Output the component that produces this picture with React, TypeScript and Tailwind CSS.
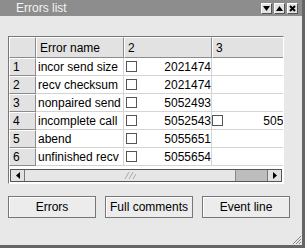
import { ReactNode } from 'react';

const rows = [
  { n: '1', name: 'incor send size', v: '2021474' },
  { n: '2', name: 'recv checksum', v: '2021474' },
  { n: '3', name: 'nonpaired send', v: '5052493' },
  { n: '4', name: 'incomplete call', v: '5052543', extra: '5055654' },
  { n: '5', name: 'abend', v: '5055651' },
  { n: '6', name: 'unfinished recv', v: '5055654' },
];

function TitleButton({ children }: { children: ReactNode }) {
  return (
    <div className="w-[11px] h-[11px] bg-[#e4e4e4] border border-t-white border-l-white border-b-[#555] border-r-[#555] flex items-center justify-center text-black">
      {children}
    </div>
  );
}

function Check() {
  return <div className="w-[11px] h-[11px] border border-[#555] bg-white shrink-0" />;
}

function HeadCell({ children, className = '' }: { children?: ReactNode; className?: string }) {
  return (
    <div
      className={`h-full bg-[#e2e2e2] border border-t-white border-l-white border-b-[#8c8c8c] border-r-[#8c8c8c] flex items-center px-[3px] shrink-0 ${className}`}
    >
      {children}
    </div>
  );
}

function Button({ label }: { label: string }) {
  return (
    <div className="w-[88px] h-[22px] bg-[#ececec] border border-[#777] shadow-[inset_1px_1px_0_#fff] flex items-center justify-center text-[12px] text-black whitespace-nowrap">
      {label}
    </div>
  );
}

export default function App() {
  return (
    <div
      className="w-[305px] h-[248px] bg-[#e8e8e8] flex flex-col border-r-[3px] border-b-[3px] border-r-[#666] border-b-[#666] overflow-hidden relative"
      style={{ fontFamily: '"Liberation Sans", Arial, sans-serif' }}
    >
      {/* title bar */}
      <div className="h-[16px] bg-[#8d8d8d] flex items-center pl-[16px] pr-[4px] shrink-0">
        <span className="text-[12px] text-[#f4f4f4] leading-none">Errors list</span>
        <div className="ml-auto flex gap-[2px]">
          <TitleButton>
            <svg width="7" height="5" viewBox="0 0 7 5"><path d="M0 0h7L3.5 5z" fill="#000" /></svg>
          </TitleButton>
          <TitleButton>
            <svg width="7" height="5" viewBox="0 0 7 5"><path d="M0 5h7L3.5 0z" fill="#000" /></svg>
          </TitleButton>
          <TitleButton>
            <svg width="7" height="7" viewBox="0 0 7 7"><path d="M1 1l5 5M6 1l-5 5" stroke="#000" strokeWidth="2" /></svg>
          </TitleButton>
        </div>
      </div>

      {/* table */}
      <div className="mt-[20px] ml-[8px] w-[276px] h-[148px] border border-t-[#777] border-l-[#777] border-b-white border-r-white flex flex-col">
        <div className="flex-1 bg-white overflow-hidden flex flex-col text-[12px] text-black">
          <div className="h-[21px] flex shrink-0 bg-[#e2e2e2]">
            <HeadCell className="w-[27px]" />
            <HeadCell className="w-[88px] border-l-[#333] border-t-[#333]">Error name</HeadCell>
            <HeadCell className="w-[88px] border-l-[#333]">2</HeadCell>
            <HeadCell className="w-[98px] border-l-[#333]">3</HeadCell>
          </div>
          {rows.map((r) => (
            <div key={r.n} className="h-[18px] flex shrink-0">
              <HeadCell className="w-[27px]">{r.n}</HeadCell>
              <div className="w-[88px] shrink-0 border-b border-r border-[#d4d4d4] flex items-center px-[2px] whitespace-nowrap overflow-hidden">
                {r.name}
              </div>
              <div className="w-[88px] shrink-0 border-b border-r border-[#d4d4d4] flex items-center pl-[2px] whitespace-nowrap overflow-hidden">
                <Check />
                <span className="ml-auto">{r.v}</span>
              </div>
              <div className="w-[98px] shrink-0 border-b border-[#d4d4d4] flex items-center whitespace-nowrap overflow-hidden">
                {r.extra && (
                  <>
                    <Check />
                    <span className="ml-auto">{r.extra}</span>
                  </>
                )}
              </div>
            </div>
          ))}
          <div className="flex-1" />
          {/* horizontal scrollbar */}
          <div className="h-[13px] mx-[1px] mb-[1px] flex shrink-0 border border-[#555] bg-[#bdbdbd]">
            <div className="w-[14px] bg-[#e2e2e2] border-r border-[#777] flex items-center justify-center">
              <svg width="4" height="7" viewBox="0 0 4 7"><path d="M4 0v7L0 3.5z" fill="#000" /></svg>
            </div>
            <div className="w-[211px] bg-[#e6e6e6] border-r border-[#888] flex items-center justify-center">
              <svg width="12" height="7" viewBox="0 0 12 7"><path d="M1 7l4-7M5 7l4-7M9 7l3-5" stroke="#aaa" strokeWidth="1" /></svg>
            </div>
            <div className="flex-1" />
            <div className="w-[14px] bg-[#e2e2e2] border-l border-[#777] flex items-center justify-center">
              <svg width="4" height="7" viewBox="0 0 4 7"><path d="M0 0v7L4 3.5z" fill="#000" /></svg>
            </div>
          </div>
        </div>
      </div>

      {/* buttons */}
      <div className="mt-[12px] ml-[8px] flex gap-[9px]">
        <Button label="Errors" />
        <Button label="Full comments" />
        <Button label="Event line" />
      </div>

      {/* resize grip */}
      <svg className="absolute right-[1px] bottom-[1px]" width="10" height="10" viewBox="0 0 10 10">
        <path d="M10 2L2 10M10 5L5 10M10 8L8 10" stroke="#888" strokeWidth="1" />
      </svg>
    </div>
  );
}
